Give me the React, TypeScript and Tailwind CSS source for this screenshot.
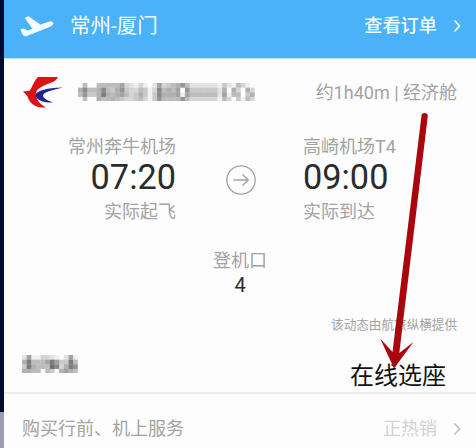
const CELL = 4.65;

// One hex digit per block, 0 is blank and f is darkest
const FLIGHT_BLOCKS = [
  "05005555573213102734568522222214215310",
  "69556954684335413956570844444426063063",
  "58446a65675346414966671755555527155046",
  "05006556543345314855558533333315304153",
];

const PASSENGER_BLOCKS = [
  "271133210271",
  "6a5557a744a5",
  "4a6555b936a8",
  "665505406765",
];

function Mosaic({ rows }: { rows: string[] }) {
  return (
    <svg width={rows[0].length * CELL} height={rows.length * CELL} className="block shrink-0" aria-hidden="true">
      {rows.flatMap((row, y) =>
        row.split("").map((value, x) => (
          <rect
            key={`${x}-${y}`}
            x={x * CELL}
            y={y * CELL}
            width={CELL}
            height={CELL}
            fill="#222222"
            opacity={parseInt(value, 16) / 17}
          />
        )),
      )}
    </svg>
  );
}

function PlaneIcon() {
  return (
    <svg width="34" height="22" viewBox="0 0 34 22" className="block" aria-hidden="true">
      <path
        d="M1 14.500L4 14l3.500 2 5.500-2L5.200 3 8.500 1.600 20.500 10l8.700-2.900c2-.6 3.600-.1 3.800.9.200 1.300-.8 2.500-2.500 3.200L7 20.500c-2 .6-3 .6-4-.8z"
        fill="#f4fdff"
        stroke="#f4fdff"
        strokeWidth="0.800"
        strokeLinejoin="round"
      />
    </svg>
  );
}

function AirlineLogo() {
  return (
    <svg width="40" height="33" viewBox="0 0 40 33" className="block" aria-hidden="true">
      <path
        d="M15 1h20c-1.500 3-4 4.700-8 6-7 3-12.500 5-14 9.500-1 4.500 2 10.500 10 15C14 32 7 29 4.500 20.500L0 15.500l6.500-.8C9 12 11 4.500 15 1z"
        fill="#dc1219"
      />
      <path
        d="M39.500 11.500C29 11.700 14.500 13.300 12.500 19c.3 5 8.500 8 17.500 7.500-5-2-10-4-10-7 .8-3.600 10-5.500 19.500-8z"
        fill="#24238d"
      />
    </svg>
  );
}

function Chevron({ className }: { className: string }) {
  return (
    <svg width="8" height="14" viewBox="0 0 8 14" fill="none" className={className} aria-hidden="true">
      <path d="M1.500 1.500L6.500 7l-5 5.500" stroke="currentColor" strokeWidth="1.600" />
    </svg>
  );
}

export default function App() {
  return (
    <div className="relative flex h-[448px] w-[476px] overflow-hidden bg-[#fdfdfd] font-[Roboto,'Noto_Sans_CJK_SC',sans-serif] text-[18px] leading-none whitespace-nowrap text-[#a3a3a3]">
      {/* Page behind the card */}
      <div className="flex w-1 shrink-0 flex-col">
        <div className="h-[412px] bg-[#020a2e]" />
        <div className="flex-1 bg-[#9c9cb0]" />
      </div>

      <main className="flex min-w-0 flex-1 flex-col">
        <header className="flex h-[59px] shrink-0 items-center border-b border-[#bfe1f5] bg-[#4bb1f8] pr-[15px] pb-[7px] pl-4 text-[#f4fdff]">
          <PlaneIcon />
          <h1 className="ml-4 pt-0.5 text-[20.500px]">常州-厦门</h1>
          <span className="ml-auto pt-0.5 text-[18.200px] font-medium">查看订单</span>
          <Chevron className="ml-4" />
        </header>

        <section className="flex h-[335px] shrink-0 flex-col border-b-2 border-[#eeeeee]">
          <div className="flex h-[66px] items-center justify-between pr-[19px] pl-[19px]">
            <div className="flex items-center gap-[15px]">
              <AirlineLogo />
              <Mosaic rows={FLIGHT_BLOCKS} />
            </div>
            <span className="pt-px">约1h40m | 经济舱</span>
          </div>

          <div className="flex pt-[13px] pl-16">
            <div className="flex w-[108px] flex-col items-end">
              <span>常州奔牛机场</span>
              <span className="mt-1 text-[34.300px] leading-[34px] text-[#2c2c2c]">07:20</span>
              <span className="mt-[9px]">实际起飞</span>
            </div>
            <svg width="32" height="32" viewBox="0 0 32 32" fill="none" className="mt-[26px] ml-[49px]" aria-hidden="true">
              <circle cx="16" cy="16" r="14.200" stroke="#a3a3a3" strokeWidth="1.300" />
              <path d="M8.500 16H23M17.500 10.500L23.300 16l-5.800 5.500" stroke="#a3a3a3" strokeWidth="1.300" />
            </svg>
            <div className="ml-[46px] flex flex-col">
              <span>高崎机场T4</span>
              <span className="mt-1 text-[34.300px] leading-[34px] text-[#2c2c2c]">09:00</span>
              <span className="mt-[9px]">实际到达</span>
            </div>
          </div>

          <div className="mt-[31px] ml-[209px] flex w-[54px] flex-col items-center">
            <span>登机口</span>
            <span className="mt-[5px] text-[20px] text-[#2c2c2c]">4</span>
          </div>

          <p className="mt-6 mr-[19px] text-right text-[12.600px]">该动态由航旅纵横提供</p>

          <div className="mt-[23px] flex justify-between pr-[30px] pl-[18px]">
            <Mosaic rows={PASSENGER_BLOCKS} />
            <span className="mt-[9px] text-[24px] text-[#111111]">在线选座</span>
          </div>
        </section>

        <footer className="flex flex-1 items-center justify-between pt-[15px] pr-[15px] pl-[18px]">
          <span>购买行前、机上服务</span>
          <div className="flex items-center gap-4 text-[#d2d2d2]">
            <span>正热销</span>
            <Chevron className="text-[#bdbdbd]" />
          </div>
        </footer>
      </main>

      {/* Pointer from the cabin class to seat selection */}
      <svg width="476" height="448" viewBox="0 0 476 448" className="pointer-events-none absolute inset-0" aria-hidden="true">
        <path
          d="M421.500 115.500c.4-3.500 6.500-3 6.300.5L399.300 353l14.200-11L394 368.500 380.200 338.500 392.500 352z"
          fill="#a9070d"
        />
      </svg>
    </div>
  );
}
